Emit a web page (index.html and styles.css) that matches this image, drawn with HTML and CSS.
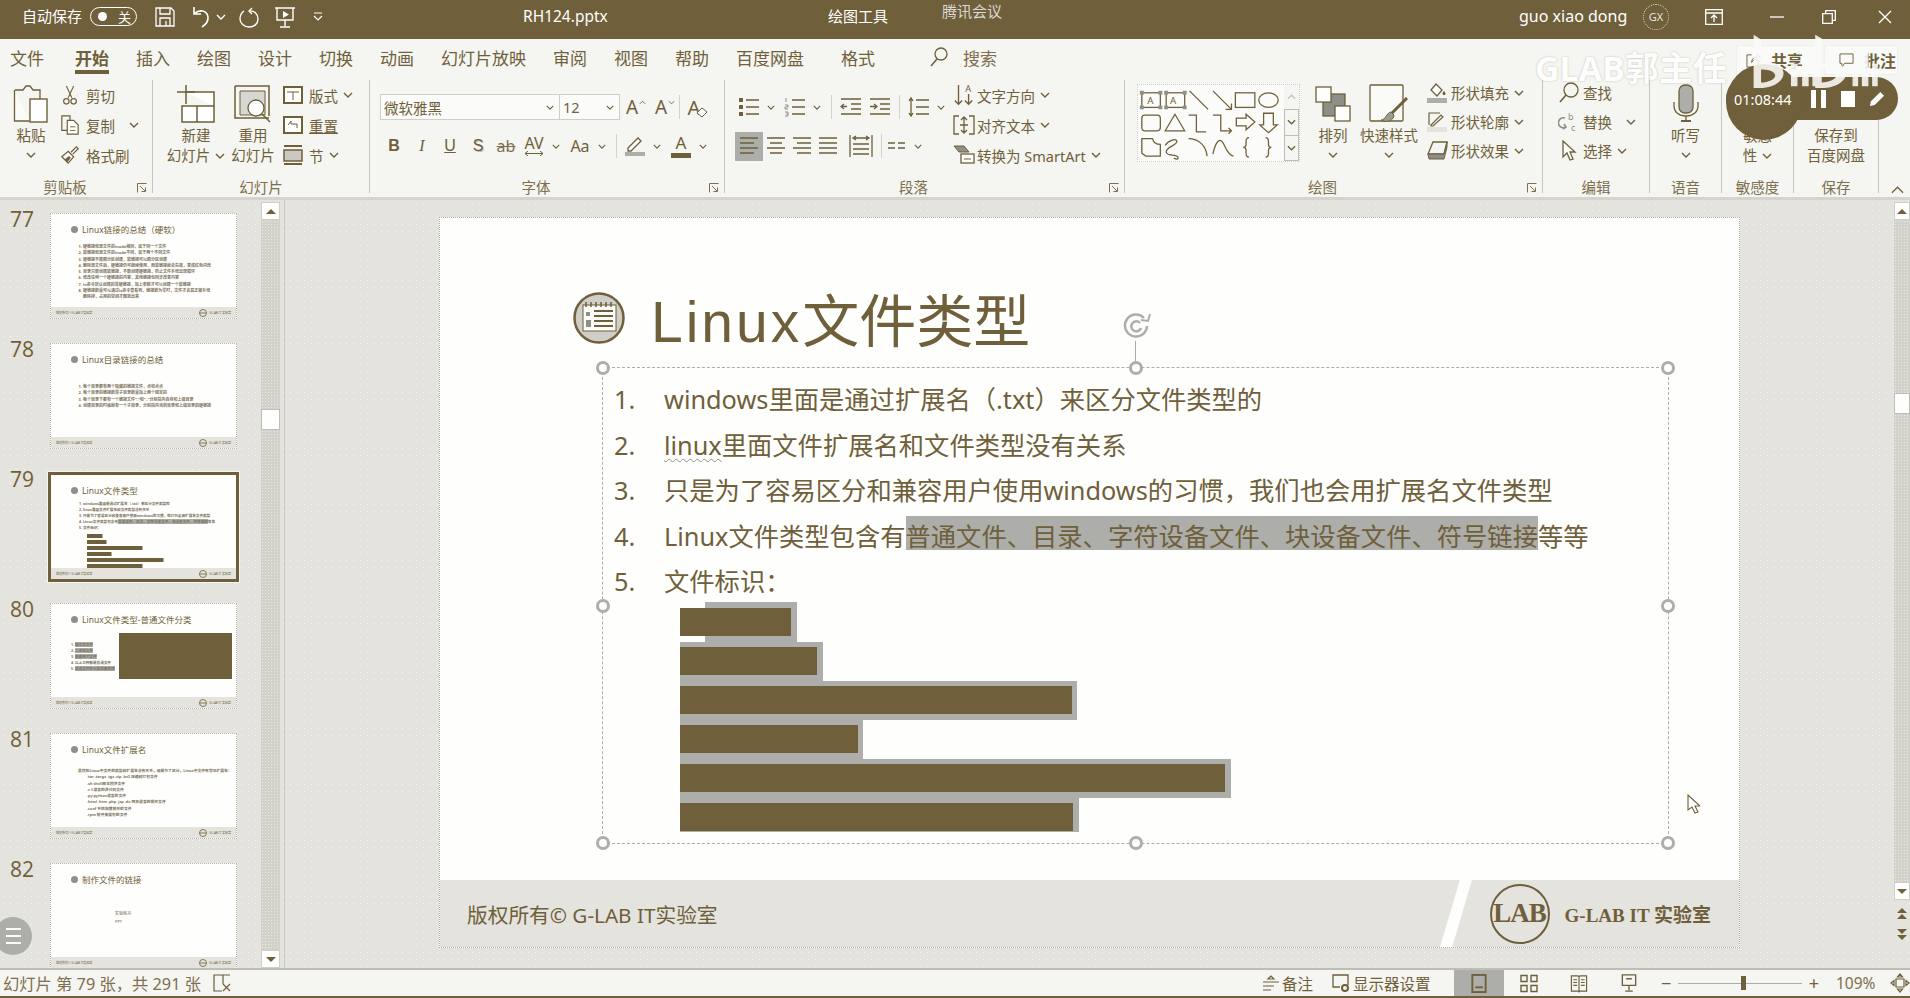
FILE: index.html
```html
<!DOCTYPE html>
<html lang="zh-CN">
<head>
    <meta charset="UTF-8">
    <title>RH124.pptx - PowerPoint</title>
    <link rel="stylesheet" href="styles.css">
</head>
<body>
    <svg class="defs" width="0" height="0">
        <symbol id="chev" viewBox="0 0 10 6"><path d="M1 1l4 4 4-4" fill="none" stroke="currentColor" stroke-width="1.4"/></symbol>
        <symbol id="launch" viewBox="0 0 10 10"><path d="M.5 9.5v-9h9M3 3l5 5M8.5 4.5v4h-4" fill="none" stroke="currentColor"/></symbol>
        <symbol id="tiny-logo" viewBox="0 0 10 10"><circle cx="5" cy="5" r="4.4" fill="none" stroke="currentColor"/><path d="M1 5h8" stroke="currentColor"/></symbol>
    </svg>

    <div class="app">
        <!-- title bar -->
        <header class="titlebar">
            <span class="autosave">自动保存</span>
            <span class="toggle"><i></i><b>关</b></span>
            <svg class="q-save" viewBox="0 0 20 20"><path d="M1 1h15l3 3v15H1zM5 1v6h10V1M5 19v-8h10v8M11 14v5" fill="none" stroke="currentColor" stroke-width="1.3"/></svg>
            <svg class="q-undo" viewBox="0 0 20 22"><path d="M4 1v7h7M4 8c5-5 13-4 14 3 .5 4-3 8-6 10" fill="none" stroke="currentColor" stroke-width="1.6"/></svg>
            <svg class="chev q-chev"><use href="#chev"/></svg>
            <svg class="q-redo" viewBox="0 0 20 22"><path d="M13 2l-3 3 3 3M10 5c5-1 9 3 9 8s-4 8-9 8-9-4-9-8c0-3 1-6 4-8" fill="none" stroke="currentColor" stroke-width="1.4"/></svg>
            <svg class="q-show" viewBox="0 0 22 22"><path d="M1 2h20M3 2v12h16V2M11 14v6M6 21h10" fill="none" stroke="currentColor" stroke-width="1.4"/><path d="M9 5l6 3.500-6 3.500z" fill="currentColor"/></svg>
            <svg class="q-more" viewBox="0 0 10 10"><path d="M1 1h8M1 4l4 4 4-4" fill="none" stroke="currentColor" stroke-width="1.2"/></svg>
            <span class="filename">RH124.pptx</span>
            <span class="context">绘图工具</span>
            <span class="meeting">腾讯会议</span>
            <span class="user">guo xiao dong</span>
            <span class="avatar">GX</span>
            <svg class="w-display" viewBox="0 0 18 16"><path d="M.7.7h16.600v14.600H.7zM1 4h16M9 13V6M6 9l3-3 3 3" fill="none" stroke="currentColor" stroke-width="1.300"/></svg>
            <svg class="w-min" viewBox="0 0 14 14"><path d="M0 7h14" stroke="currentColor" stroke-width="1.300"/></svg>
            <svg class="w-restore" viewBox="0 0 14 14"><path d="M.7 3.700h9.600v9.600H.7zM3.700 3.500V.7h9.600v9.600h-2.800" fill="none" stroke="currentColor" stroke-width="1.300"/></svg>
            <svg class="w-close" viewBox="0 0 14 14"><path d="M1 1l12 12M13 1L1 13" stroke="currentColor" stroke-width="1.300"/></svg>
        </header>

        <!-- tabs -->
        <nav class="tabs">
            <span>文件</span>
            <span class="tab-active">开始</span>
            <span>插入</span>
            <span>绘图</span>
            <span>设计</span>
            <span>切换</span>
            <span>动画</span>
            <span>幻灯片放映</span>
            <span>审阅</span>
            <span>视图</span>
            <span>帮助</span>
            <span>百度网盘</span>
            <span class="tab-format">格式</span>
            <svg class="tab-search-icon" viewBox="0 0 18 20"><circle cx="11" cy="7" r="6" fill="none" stroke="currentColor" stroke-width="1.300"/><path d="M7 12l-6 7" stroke="currentColor" stroke-width="1.500"/></svg>
            <span class="tab-search">搜索</span>
            <span class="share-btn">
                <svg viewBox="0 0 16 16" class="share-icon"><path d="M6 2H1v13h12v-4M6 10c0-4 3-6 6-6V1l4 5-4 4V7c-3 0-5 1-6 3z" fill="none" stroke="currentColor"/></svg>共享
            </span>
            <span class="share-btn comment-btn">
                <svg viewBox="0 0 16 16" class="share-icon"><path d="M1 1h14v10H6l-3 4v-4H1z" fill="none" stroke="currentColor"/></svg>批注
            </span>
        </nav>

        <!-- ribbon -->
        <section class="ribbon">
            <div class="group g-clip">
                <div class="group-body">
                    <div class="big big-paste">
                        <svg class="big-icon" width="36" height="40" viewBox="0 0 36 40"><path d="M2 6h8l3-4h4l3 4h7v10" fill="none" stroke="currentColor" stroke-width="1.300"/><path d="M1.500 6v31h15" fill="#fbfbf8" stroke="currentColor" stroke-width="1.300"/><rect x="17" y="15" width="17" height="23" fill="#fff" stroke="currentColor" stroke-width="1.400"/></svg>
                        <span>粘贴</span>
                        <svg class="chev"><use href="#chev"/></svg>
                    </div>
                    <div class="small-col">
                        <div class="row"><svg class="row-icon" viewBox="0 0 20 22"><path d="M6 1l6 13M14 1L8 14" stroke="currentColor" fill="none" stroke-width="1.200"/><circle cx="6" cy="18" r="3" fill="none" stroke="currentColor" stroke-width="1.300"/><circle cx="14" cy="18" r="3" fill="none" stroke="currentColor" stroke-width="1.300"/></svg>剪切</div>
                        <div class="row"><svg class="row-icon" viewBox="0 0 20 22"><path d="M7 17H1V1h9v5" fill="none" stroke="currentColor" stroke-width="1.300"/><path d="M7 6h7l5 5v10H7z" fill="#fff" stroke="currentColor" stroke-width="1.300"/><path d="M10 13h6M10 17h6" stroke="currentColor"/></svg>复制<svg class="chev chev-gap"><use href="#chev"/></svg></div>
                        <div class="row"><svg class="row-icon" viewBox="0 0 20 22"><path d="M1 13l7-6 6 6-6 7zM11 8l6-6 2 2-6 6" fill="#fff" stroke="currentColor" stroke-width="1.400"/><path d="M4 16l5-4 2 2-4 5z" fill="currentColor"/></svg>格式刷</div>
                    </div>
                </div>
                <div class="group-label"><span>剪贴板</span><svg class="launch"><use href="#launch"/></svg></div>
            </div>

            <div class="group g-slides">
                <div class="group-body">
                    <div class="big big-slide">
                        <svg class="big-icon" width="38" height="40" viewBox="0 0 38 40"><path d="M8 8h29v30H5V22h32M20 22v16" fill="#fff" stroke="currentColor" stroke-width="1.500"/><path d="M9 1v19M0 8h18" stroke="currentColor" stroke-width="1.500"/></svg>
                        <span>新建</span>
                        <span>幻灯片<svg class="chev chev-in"><use href="#chev"/></svg></span>
                    </div>
                    <div class="big big-slide big-reuse">
                        <svg class="big-icon" width="38" height="40" viewBox="0 0 38 40"><path d="M1 2h34v30M1 2v32h34" fill="none" stroke="currentColor" stroke-width="1.500"/><path d="M6 7h25v24H6z" fill="#d8d7d1" stroke="currentColor"/><circle cx="22" cy="24" r="8" fill="#fff" stroke="currentColor" stroke-width="1.300"/><path d="M28 30l8 8" stroke="currentColor" stroke-width="1.500"/></svg>
                        <span>重用</span>
                        <span>幻灯片</span>
                    </div>
                    <div class="small-col slide-tools">
                        <div class="row"><svg class="row-icon" viewBox="0 0 20 20"><rect x="1" y="2" width="18" height="16" fill="#fff" stroke="currentColor" stroke-width="2"/><path d="M4 7h12M10 7v8" stroke="currentColor"/></svg>版式<svg class="chev chev-in"><use href="#chev"/></svg></div>
                        <div class="row"><svg class="row-icon" viewBox="0 0 20 20"><rect x="1" y="2" width="18" height="16" fill="#fff" stroke="currentColor" stroke-width="2"/><path d="M5 10l3-4v3h6v4" fill="none" stroke="currentColor"/></svg><u>重置</u></div>
                        <div class="row"><svg class="row-icon" viewBox="0 0 20 20"><path d="M1 1h18M1 19h18" stroke="currentColor" stroke-width="2"/><rect x="1" y="5" width="18" height="11" fill="#c9c8c2" stroke="currentColor" stroke-width="1.500"/></svg>节<svg class="chev chev-in"><use href="#chev"/></svg></div>
                    </div>
                </div>
                <div class="group-label group-label-plain"><span>幻灯片</span></div>
            </div>

            <div class="group g-font">
                <div class="group-body stack">
                    <div class="tool-row">
                        <span class="combo combo-font">微软雅黑<svg class="chev"><use href="#chev"/></svg></span>
                        <span class="combo combo-size">12<svg class="chev"><use href="#chev"/></svg></span>
                        <span class="tool tool-glyph tool-grow">A<svg class="caret" viewBox="0 0 8 5"><path d="M1 4l3-3 3 3" fill="none" stroke="currentColor"/></svg></span>
                        <span class="tool tool-glyph tool-shrink">A<svg class="caret" viewBox="0 0 8 5"><path d="M1 1l3 3 3-3" fill="none" stroke="currentColor"/></svg></span>
                        <i class="sep sep-thin"></i>
                        <span class="tool tool-glyph tool-clear">A<svg class="eraser" viewBox="0 0 12 12"><path d="M1 7l5-5 5 4-5 5z" fill="#fff" stroke="currentColor"/></svg></span>
                    </div>
                    <div class="tool-row">
                        <span class="tool tool-b">B</span>
                        <span class="tool tool-i">I</span>
                        <span class="tool tool-u">U</span>
                        <span class="tool tool-s">S</span>
                        <span class="tool tool-strike">ab</span>
                        <span class="tool-drop"><span class="tool tool-av">AV<svg viewBox="0 0 20 5"><path d="M1 2.500h18M4 0L1 2.500 4 5M16 0l3 2.500L16 5" fill="none" stroke="currentColor"/></svg></span><svg class="chev"><use href="#chev"/></svg></span>
                        <span class="tool-drop"><span class="tool tool-case">Aa</span><svg class="chev"><use href="#chev"/></svg></span>
                        <i class="sep"></i>
                        <span class="tool-drop"><span class="tool"><svg class="ic22" viewBox="0 0 22 22"><path d="M4 13L14 3l3 3L7 16H4z" fill="#fff" stroke="currentColor" stroke-width="1.300"/><rect x="1" y="17" width="20" height="4" fill="#adaeaa"/></svg></span><svg class="chev"><use href="#chev"/></svg></span>
                        <span class="tool-drop"><span class="tool tool-color">A<i></i></span><svg class="chev"><use href="#chev"/></svg></span>
                    </div>
                </div>
                <div class="group-label"><span>字体</span><svg class="launch"><use href="#launch"/></svg></div>
            </div>

            <div class="group g-para">
                <div class="group-body para-body">
                    <div class="stack para-left">
                        <div class="tool-row">
                            <span class="tool-drop"><span class="tool"><svg class="ic22" viewBox="0 0 22 22"><path d="M8 4h13M8 11h13M8 18h13" stroke="currentColor" stroke-width="1.400"/><path d="M1 2h4v4H1zM1 9h4v4H1zM1 16h4v4H1z" fill="currentColor"/></svg></span><svg class="chev"><use href="#chev"/></svg></span>
                            <span class="tool-drop"><span class="tool"><svg class="ic22" viewBox="0 0 22 22"><path d="M8 4h13M8 11h13M8 18h13" stroke="currentColor" stroke-width="1.400"/><path d="M2 2v4M1 9h3v2H1v2h3M1 16h3v4H1M2 18h2" fill="none" stroke="#8f8f8a"/></svg></span><svg class="chev"><use href="#chev"/></svg></span>
                            <i class="sep"></i>
                            <span class="tool tool-30"><svg class="ic22" viewBox="0 0 22 22"><path d="M1 3h20M11 8h10M11 13h10M1 18h20M7 10.500H2M4 8l-3 2.500L4 13" fill="none" stroke="currentColor" stroke-width="1.300"/></svg></span>
                            <span class="tool"><svg class="ic22" viewBox="0 0 22 22"><path d="M1 3h20M11 8h10M11 13h10M1 18h20M1 10.500h6M5 8l3 2.500L5 13" fill="none" stroke="currentColor" stroke-width="1.300"/></svg></span>
                            <i class="sep sep-wide"></i>
                            <span class="tool-drop"><span class="tool"><svg class="ic22" viewBox="0 0 22 22"><path d="M8 4h13M8 11h13M8 18h13M3 2v18M1 5l2-3 2 3M1 17l2 3 2-3" fill="none" stroke="currentColor" stroke-width="1.300"/></svg></span><svg class="chev"><use href="#chev"/></svg></span>
                        </div>
                        <div class="tool-row">
                            <span class="tool tool-28 tool-on"><svg class="ic22" viewBox="0 0 22 22"><path d="M2 3h18M2 8h14M2 13h18M2 18h14" stroke="currentColor" stroke-width="1.400"/></svg></span>
                            <span class="tool tool-26"><svg class="ic22" viewBox="0 0 22 22"><path d="M2 3h18M5 8h12M2 13h18M5 18h12" stroke="currentColor" stroke-width="1.400"/></svg></span>
                            <span class="tool tool-26"><svg class="ic22" viewBox="0 0 22 22"><path d="M2 3h18M6 8h14M2 13h18M6 18h14" stroke="currentColor" stroke-width="1.400"/></svg></span>
                            <span class="tool tool-26"><svg class="ic22" viewBox="0 0 22 22"><path d="M2 3h18M2 8h18M2 13h18M2 18h18" stroke="currentColor" stroke-width="1.400"/></svg></span>
                            <span class="tool tool-40"><svg class="ic24" viewBox="0 0 24 24"><path d="M1 1v22M23 1v22M4 10h16M4 15h16M4 20h16M4 4h16M7 2L4 4l3 2M17 2l3 2-3 2" fill="none" stroke="currentColor" stroke-width="1.300"/></svg></span>
                            <i class="sep sep-tight"></i>
                            <span class="tool-drop"><span class="tool"><svg class="ic22" viewBox="0 0 22 22"><path d="M3 8h7M3 13h7M13 8h7M13 13h7" stroke="currentColor" stroke-width="1.600"/></svg></span><svg class="chev"><use href="#chev"/></svg></span>
                        </div>
                    </div>
                    <div class="small-col para-right">
                        <div class="row row-para"><svg class="row-icon row-icon-22" viewBox="0 0 22 24"><path d="M5 1v21M1 18l4 4 4-4M16 11v11M12 18l4 4 4-4" fill="none" stroke="currentColor" stroke-width="1.500"/><text x="12.500" y="9" class="svg-text">A</text></svg>文字方向<svg class="chev chev-in"><use href="#chev"/></svg></div>
                        <div class="row row-para"><svg class="row-icon row-icon-22" viewBox="0 0 22 22"><path d="M6 2H1v18h5M16 2h5v18h-5M11 3v16M8 6l3-3 3 3M8 16l3 3 3-3M7 11h8" fill="none" stroke="currentColor" stroke-width="1.300"/></svg>对齐文本<svg class="chev chev-in"><use href="#chev"/></svg></div>
                        <div class="row row-para"><svg class="row-icon row-icon-22" viewBox="0 0 22 22"><path d="M1 2h10l5 6H6z" fill="#8f8f8a" stroke="currentColor"/><rect x="8" y="10" width="13" height="9" fill="#fff" stroke="currentColor" stroke-width="1.300"/><path d="M11 15h7" stroke="currentColor"/></svg>转换为 SmartArt<svg class="chev chev-in"><use href="#chev"/></svg></div>
                    </div>
                </div>
                <div class="group-label"><span>段落</span><svg class="launch"><use href="#launch"/></svg></div>
            </div>

            <div class="group g-draw">
                <div class="group-body">
                    <div class="gallery">
                        <svg class="gallery-shapes" viewBox="0 0 146 78" fill="none" stroke="currentColor" stroke-width="1.300">
                            <rect x="2" y="8" width="19" height="15"/><text x="7.500" y="20" class="svg-text">A</text>
                            <path d="M0 6h4v4H0zM19 6h4v4h-4zM0 21h4v4H0zM19 21h4v4h-4z" fill="#8f8f8a" stroke="none"/>
                            <rect x="27" y="8" width="19" height="15"/><text x="31" y="20" class="svg-text">A</text>
                            <path d="M25 6h4v4h-4zM44 6h4v4h-4zM25 21h4v4h-4zM44 21h4v4h-4z" fill="#8f8f8a" stroke="none"/>
                            <path d="M51 6l19 19M75 6l19 19M94 19v6h-6"/>
                            <rect x="98" y="8" width="20" height="15"/>
                            <ellipse cx="132" cy="15.500" rx="10" ry="7.500"/>
                            <rect x="2" y="31" width="19" height="16" rx="3"/>
                            <path d="M36 30l10 17H26zM50 31h8v17h10M75 31h8v16h11M91 44l3 3-3 3"/>
                            <path d="M99 34h10v-4l9 8-9 8v-4H99zM127 29h10v12h4l-9 8-9-8h4z"/>
                            <path d="M2 55h11c1 4 4 6 8 6v12H6l-4-3zM26 62c3-5 12-8 12-4s-12 6-11 11 10 1 12 5c1 3-2 2-4 1M50 55c10 0 18 7 19 18M75 71c2-10 5-15 8-14 4 1 5 14 13 16"/>
                            <path d="M112 54c-3 0-3 2-3 4v3c0 2-1 3-3 3 2 0 3 1 3 3v3c0 2 0 4 3 4M129 54c3 0 3 2 3 4v3c0 2 1 3 3 3-2 0-3 1-3 3v3c0 2 0 4-3 4"/>
                        </svg>
                        <div class="gallery-scroll">
                            <span class="gs-up"><svg class="chev"><use href="#chev"/></svg></span>
                            <span class="gs-mid"><svg class="chev"><use href="#chev"/></svg></span>
                            <span class="gs-more"><svg class="chev"><use href="#chev"/></svg></span>
                        </div>
                    </div>
                    <div class="big big-arrange">
                        <svg class="big-icon" width="36" height="36" viewBox="0 0 36 36"><rect x="8" y="8" width="22" height="22" fill="#8f8f8a" stroke="currentColor" stroke-width="1.300"/><rect x="1" y="1" width="15" height="15" fill="#fff" stroke="currentColor" stroke-width="1.300"/><rect x="20" y="20" width="15" height="15" fill="#fff" stroke="currentColor" stroke-width="1.300"/></svg>
                        <span>排列</span>
                        <svg class="chev"><use href="#chev"/></svg>
                    </div>
                    <div class="big big-quick">
                        <svg class="big-icon" width="40" height="40" viewBox="0 0 40 40"><rect x="1" y="1" width="33" height="36" rx="1" fill="#fafaf7" stroke="currentColor" stroke-width="1.300"/><path d="M38 14L22 30" stroke="currentColor" stroke-width="3"/><path d="M22 28c-5 1-5 8-10 8 5 3 13 1 13-5z" fill="#9b9b93" stroke="currentColor"/></svg>
                        <span>快速样式</span>
                        <svg class="chev"><use href="#chev"/></svg>
                    </div>
                    <div class="small-col shape-col">
                        <div class="row row-shape"><svg class="row-icon row-icon-22" viewBox="0 0 22 22"><path d="M10 2l6 6-5 6-6-6z" fill="#fff" stroke="currentColor" stroke-width="1.300"/><path d="M18 9c2 2 2 4 0 4s-2-2 0-4z" fill="currentColor"/><rect x="1" y="16" width="20" height="5" fill="#adaeaa"/></svg>形状填充<svg class="chev chev-in"><use href="#chev"/></svg></div>
                        <div class="row row-shape"><svg class="row-icon row-icon-22" viewBox="0 0 22 22"><path d="M14 2H3v12M5 14l10-10 2 2L7 15H5z" fill="none" stroke="currentColor" stroke-width="1.200"/><rect x="1" y="16" width="20" height="5" fill="#e4e3dd"/></svg>形状轮廓<svg class="chev chev-in"><use href="#chev"/></svg></div>
                        <div class="row row-shape"><svg class="row-icon row-icon-22" viewBox="0 0 22 22"><path d="M7 2h14l-3 12H2z" fill="#f4f4f0" stroke="currentColor" stroke-width="1.300"/><path d="M2 14h16l3-12v5l-3 12H3z" fill="#8f8f8a" stroke="currentColor"/></svg>形状效果<svg class="chev chev-in"><use href="#chev"/></svg></div>
                    </div>
                </div>
                <div class="group-label"><span>绘图</span><svg class="launch"><use href="#launch"/></svg></div>
            </div>

            <div class="group g-edit">
                <div class="group-body">
                    <div class="small-col edit-col">
                        <div class="row row-shape"><svg class="row-icon row-icon-22" viewBox="0 0 20 22"><circle cx="12" cy="8" r="7" fill="none" stroke="currentColor" stroke-width="1.300"/><path d="M7 13l-6 7" stroke="currentColor" stroke-width="1.600"/></svg>查找</div>
                        <div class="row row-shape"><svg class="row-icon row-icon-22" viewBox="0 0 20 22"><path d="M6 7a5 5 0 1 0 1 9M4 18l3-2-2-3" fill="none" stroke="#8f8f8a" stroke-width="1.600"/><text x="9" y="9" class="svg-text svg-text-soft">b</text><text x="12" y="20" class="svg-text svg-text-soft">c</text></svg>替换<svg class="chev chev-gap"><use href="#chev"/></svg></div>
                        <div class="row row-shape"><svg class="row-icon row-icon-22" viewBox="0 0 16 22"><path d="M2 1v16l4-4 3 7 3-1-3-7h5z" fill="#fff" stroke="currentColor" stroke-width="1.300"/></svg>选择<svg class="chev chev-in"><use href="#chev"/></svg></div>
                    </div>
                </div>
                <div class="group-label group-label-plain"><span>编辑</span></div>
            </div>

            <div class="group g-voice">
                <div class="group-body">
                    <div class="big big-full">
                        <svg class="big-icon" width="26" height="40" viewBox="0 0 26 40"><rect x="6" y="1" width="14" height="28" rx="6" fill="#adaeaa" stroke="currentColor" stroke-width="1.300"/><path d="M1 18v4c0 6 5 10 12 10s12-4 12-10v-4M13 32v5" fill="none" stroke="currentColor" stroke-width="1.300"/><path d="M8 37h10" stroke="currentColor" stroke-width="2"/></svg>
                        <span>听写</span>
                        <svg class="chev"><use href="#chev"/></svg>
                    </div>
                </div>
                <div class="group-label group-label-plain"><span>语音</span></div>
            </div>

            <div class="group g-sens">
                <div class="group-body">
                    <div class="big big-full">
                        <span class="big-blank"></span>
                        <span>敏感</span>
                        <span>性<svg class="chev chev-in"><use href="#chev"/></svg></span>
                    </div>
                </div>
                <div class="group-label group-label-plain"><span>敏感度</span></div>
            </div>

            <div class="group g-save">
                <div class="group-body">
                    <div class="big big-full">
                        <span class="big-blank"></span>
                        <span>保存到</span>
                        <span>百度网盘</span>
                    </div>
                </div>
                <div class="group-label group-label-plain"><span>保存</span></div>
            </div>

            <svg class="collapse" viewBox="0 0 14 8"><path d="M1 7l6-6 6 6" fill="none" stroke="currentColor" stroke-width="1.300"/></svg>
        </section>

        <!-- thumbnails + slide -->
        <main class="workspace">
            <aside class="thumbs">
                <div class="thumb-list-wrap">
                    <div class="thumb-row">
                        <span class="thumb-num">77</span>
                        <div class="thumb">
                            <div class="thumb-main">
                                <div class="thumb-title"><i></i>Linux链接的总结（硬软）</div>
                                <ol class="thumb-lines">
                                    <li>硬链接和源文件的inode相同，属于同一个文件</li>
                                    <li>软链接和源文件的inode不同，属于两个不同文件</li>
                                    <li>硬链接不能跨分区创建，软链接可以跨分区创建</li>
                                    <li>删除源文件后，硬链接仍可继续使用，而软链接就会失效，变成红色闪烁</li>
                                    <li>目录只能创建软链接，不能创建硬链接，防止文件系统出现循环</li>
                                    <li>修改任何一个硬链接的内容，其他链接也同步改变内容</li>
                                    <li>ln命令默认创建的是硬链接，加上参数才可以创建一个软链接</li>
                                    <li>硬链接数量可以通过ls命令查看到，链接数为零时，文件才会真正被系统删除掉，占用的空间才释放出来</li>
                                </ol>
                            </div>
                            <div class="thumb-foot"><span>版权所有© G-LAB IT实验室</span><span class="thumb-brand"><svg><use href="#tiny-logo"/></svg>G-LAB IT 实验室</span></div>
                        </div>
                    </div>
                    <div class="thumb-row">
                        <span class="thumb-num">78</span>
                        <div class="thumb">
                            <div class="thumb-main">
                                <div class="thumb-title"><i></i>Linux目录链接的总结</div>
                                <ol class="thumb-lines lines-78">
                                    <li>每个目录都有两个隐藏的链接文件，点和点点</li>
                                    <li>每个目录的链接数是子目录数量加上两个固定的</li>
                                    <li>每个目录下都有一个链接文件“.”和“..”分别指向自身和上级目录</li>
                                    <li>创建目录的时候就有一个子目录，分别指向当前目录和上级目录的硬链接</li>
                                </ol>
                            </div>
                            <div class="thumb-foot"><span>版权所有© G-LAB IT实验室</span><span class="thumb-brand"><svg><use href="#tiny-logo"/></svg>G-LAB IT 实验室</span></div>
                        </div>
                    </div>
                    <div class="thumb-row">
                        <span class="thumb-num">79</span>
                        <div class="thumb thumb-selected">
                            <div class="thumb-main">
                                <div class="thumb-title"><i></i>Linux文件类型</div>
                                <ol class="thumb-lines lines-79">
                                    <li>windows里面是通过扩展名（.txt）来区分文件类型的</li>
                                    <li>linux里面文件扩展名和文件类型没有关系</li>
                                    <li>只是为了容易区分和兼容用户使用windows的习惯，我们也会用扩展名文件类型</li>
                                    <li>Linux文件类型包含有<mark>普通文件、目录、字符设备文件、块设备文件、符号链接</mark>等等</li>
                                    <li>文件标识：</li>
                                </ol>
                                <div class="mini-bars">
                                    <i class="mb-1"></i><i class="mb-2"></i><i class="mb-3"></i><i class="mb-4"></i><i class="mb-5"></i><i class="mb-3"></i>
                                </div>
                            </div>
                            <div class="thumb-foot"><span>版权所有© G-LAB IT实验室</span><span class="thumb-brand"><svg><use href="#tiny-logo"/></svg>G-LAB IT 实验室</span></div>
                        </div>
                    </div>
                    <div class="thumb-row">
                        <span class="thumb-num">80</span>
                        <div class="thumb">
                            <div class="thumb-main">
                                <div class="thumb-title"><i></i>Linux文件类型-普通文件分类</div>
                                <div class="split-80">
                                    <ol class="thumb-lines lines-80">
                                        <li><mark>纯文本文件</mark></li>
                                        <li><mark>二进制文件</mark></li>
                                        <li><mark>数据格式文件</mark></li>
                                        <li>以上三种都是普通文件</li>
                                        <li><mark>普通文件的分类就是这样</mark></li>
                                    </ol>
                                    <div class="block-80"></div>
                                </div>
                            </div>
                            <div class="thumb-foot"><span>版权所有© G-LAB IT实验室</span><span class="thumb-brand"><svg><use href="#tiny-logo"/></svg>G-LAB IT 实验室</span></div>
                        </div>
                    </div>
                    <div class="thumb-row">
                        <span class="thumb-num">81</span>
                        <div class="thumb">
                            <div class="thumb-main">
                                <div class="thumb-title"><i></i>Linux文件扩展名</div>
                                <div class="ext-81">
                                    <p>虽然在Linux中文件的类型和扩展名没有关系，但是为了区分，Linux中文件有常见扩展名：</p>
                                    <p class="ext-in">.tar .tar.gz .tgz .zip .bz2 压缩和打包文件</p>
                                    <p class="ext-in">.sh shell脚本程序文件</p>
                                    <p class="ext-in">.c C语言的源代码文件</p>
                                    <p class="ext-in">.py python语言的文件</p>
                                    <p class="ext-in">.html .htm .php .jsp .do 网页语言的相关文件</p>
                                    <p class="ext-in">.conf 系统配置相关的文件</p>
                                    <p class="ext-in">.rpm 软件安装包的文件</p>
                                </div>
                            </div>
                            <div class="thumb-foot"><span>版权所有© G-LAB IT实验室</span><span class="thumb-brand"><svg><use href="#tiny-logo"/></svg>G-LAB IT 实验室</span></div>
                        </div>
                    </div>
                    <div class="thumb-row">
                        <span class="thumb-num">82</span>
                        <div class="thumb">
                            <div class="thumb-main">
                                <div class="thumb-title thumb-title-cn"><i></i>制作文件的链接</div>
                                <div class="note-82"><p>实验练习</p><p>PPT</p></div>
                            </div>
                            <div class="thumb-foot"><span>版权所有© G-LAB IT实验室</span><span class="thumb-brand"><svg><use href="#tiny-logo"/></svg>G-LAB IT 实验室</span></div>
                        </div>
                    </div>
                </div>
                <div class="thumb-scroll">
                    <span class="sb-btn"><i class="tri-up"></i></span>
                    <span class="sb-track sb-track-a"></span>
                    <span class="sb-thumb"></span>
                    <span class="sb-track"></span>
                    <span class="sb-btn"><i class="tri-down"></i></span>
                </div>
            </aside>

            <div class="stage">
                <article class="slide">
                    <div class="slide-body">
                        <h1 class="slide-title">
                            <svg class="title-badge" viewBox="0 0 52 52"><circle cx="26" cy="26" r="24.500" fill="#cfcec8" stroke="#6f5f3a" stroke-width="2.500"/><rect x="10" y="13" width="33" height="26" fill="#fbfbf8" stroke="#6f5f3a"/><path d="M13 10v5M18 10v5M23 10v5M28 10v5M33 10v5M38 10v5" stroke="#6f5f3a" stroke-width="1.500"/><path d="M21 19h19M21 24h19M21 29h19M21 34h19" stroke="#6f5f3a" stroke-width="2"/><path d="M13 20h4v4h-4zM13 28h5v7h-5z" fill="#8f8f8a"/></svg>
                            <span><span class="title-latin">Linux</span>文件类型</span>
                        </h1>
                        <div class="placeholder">
                            <span class="rotate-stalk"></span>
                            <svg class="rotate" viewBox="0 0 32 32"><path d="M24 8a11 11 0 1 0 3 8M20 13a5 5 0 1 0 1 5" fill="none" stroke="#adaeaa" stroke-width="2.500"/><path d="M21 10l7 1 2-7" fill="none" stroke="#adaeaa" stroke-width="2"/></svg>
                            <i class="handle h-tl"></i><i class="handle h-tm"></i><i class="handle h-tr"></i>
                            <i class="handle h-ml"></i><i class="handle h-mr"></i>
                            <i class="handle h-bl"></i><i class="handle h-bm"></i><i class="handle h-br"></i>

                            <ol class="points">
                                <li><span class="num">1.</span><span>windows里面是通过扩展名（.txt）来区分文件类型的</span></li>
                                <li><span class="num">2.</span><span><span class="squiggle">linux</span>里面文件扩展名和文件类型没有关系</span></li>
                                <li><span class="num">3.</span><span>只是为了容易区分和兼容用户使用windows的习惯，我们也会用扩展名文件类型</span></li>
                                <li><span class="num">4.</span><span>Linux文件类型包含有<mark class="hl">普通文件、目录、字符设备文件、块设备文件、符号链接</mark>等等</span></li>
                                <li><span class="num">5.</span><span>文件标识：</span></li>
                            </ol>

                            <div class="redactions">
                                <div class="rd-row rd-1"><i></i></div>
                                <div class="rd-row rd-2"><i></i></div>
                                <div class="rd-row rd-3"><i></i></div>
                                <div class="rd-row rd-4"><i></i></div>
                                <div class="rd-row rd-5"><i></i></div>
                                <div class="rd-row rd-6"><i></i></div>
                            </div>
                        </div>
                        <svg class="mouse" viewBox="0 0 13 20"><path d="M1 1v15l4-3 3 6 3-1-3-6h5z" fill="#fff" stroke="#6f5f3a" stroke-width="1.100"/></svg>
                    </div>
                    <footer class="slide-foot">
                        <i class="foot-stripe"></i>
                        <span class="copyright">版权所有© G-LAB IT实验室</span>
                        <span class="foot-brand">
                            <span class="lab-logo">LAB</span>
                            <span class="lab-name">G-LAB IT 实验室</span>
                        </span>
                    </footer>
                </article>
            </div>

            <div class="main-scroll">
                <span class="sb-btn"><i class="tri-up"></i></span>
                <span class="sb-track sb-track-b"></span>
                <span class="sb-thumb"></span>
                <span class="sb-track sb-track-c"></span>
                <span class="sb-btn"><i class="tri-down"></i></span>
                <span class="page-jump"><i class="tri-up"></i><i class="tri-up"></i></span>
                <span class="page-jump"><i class="tri-down"></i><i class="tri-down"></i></span>
            </div>
        </main>

        <!-- status bar -->
        <footer class="statusbar">
            <span class="status-count">幻灯片 第 79 张，共 291 张</span>
            <svg class="status-spell" viewBox="0 0 18 18"><path d="M17 1H1v16h8M10 1v9M10 10l7 7M17 10l-7 7" fill="none" stroke="currentColor" stroke-width="1.200"/></svg>
            <span class="status-notes"><svg viewBox="0 0 18 16"><path d="M1 7h16M1 11h11M1 15h8M9 1l-3 3h6z" fill="none" stroke="currentColor" stroke-width="1.200"/></svg>备注</span>
            <span class="status-display"><svg viewBox="0 0 18 18"><path d="M16 11V1H1v12h7" fill="none" stroke="currentColor" stroke-width="1.300"/><circle cx="13" cy="14" r="3" fill="none" stroke="currentColor" stroke-width="2"/></svg>显示器设置</span>
            <span class="view view-on"><svg viewBox="0 0 16 20"><rect x="1" y="1" width="14" height="18" fill="none" stroke="currentColor" stroke-width="2"/><path d="M4 14h8" stroke="currentColor" stroke-width="2"/></svg></span>
            <span class="view"><svg viewBox="0 0 18 18"><path d="M1 1h6v6H1zM11 1h6v6h-6zM1 11h6v6H1zM11 11h6v6h-6z" fill="none" stroke="currentColor" stroke-width="1.400"/></svg></span>
            <span class="view"><svg viewBox="0 0 18 20"><path d="M1 2h7l1 1 1-1h7v16h-7l-1 1-1-1H1zM9 3v15M3 6h4M3 9h4M3 12h4M11 6h4M11 9h4M11 12h4" fill="none" stroke="currentColor" stroke-width="1.200"/></svg></span>
            <span class="view"><svg viewBox="0 0 16 20"><path d="M1 1h14v11H1zM8 12v5M4 18h8M5 5h6" fill="none" stroke="currentColor" stroke-width="1.400"/></svg></span>
            <div class="zoom-slider">
                <span class="zoom-sign">−</span>
                <span class="zoom-track"><i></i></span>
                <span class="zoom-sign">+</span>
            </div>
            <span class="zoom-pct">109%</span>
            <svg class="fit" viewBox="0 0 20 20"><path d="M6 6h8v8H6zM10 1l-2.500 3h5zM10 19l-2.500-3h5zM1 10l3-2.500v5zM19 10l-3-2.500v5z" fill="none" stroke="currentColor" stroke-width="1.200"/></svg>
        </footer>

        <!-- things floating over the window -->
        <div class="watermark">GLAB郭主任</div>
        <div class="recorder">
            <span class="rec-time">01:08:44</span>
            <span class="rec-pause"><i></i><i></i></span>
            <span class="rec-stop"></span>
            <svg class="rec-pen" viewBox="0 0 16 16"><path d="M0 16l1-5L11 1l4 4L5 15z" fill="#fff"/></svg>
        </div>
        <svg class="bili" viewBox="0 0 150 62" fill="#fbfbf8">
            <path d="M6 3l8 5v26c8-3 22-2 24 9 1 10-12 17-25 17H6zM14 40v14c8 0 16-4 15-8-1-5-9-6-15-6z"/>
            <path d="M46 34h7v24h-7zM58 22h7v36h-7zM69 34h6v24h-6z"/>
            <path d="M72 3l7 4v27c10-3 24-1 26 9 1 10-12 17-26 17h-7zM79 40v14c8 0 16-4 16-8-1-5-10-6-16-6z"/>
            <path d="M112 34h6v24h-6zM122 22h7v36h-7zM133 34h6v24h-6z"/>
        </svg>
        <div class="float-menu"><i></i><i></i><i></i></div>
    </div>
</body>
</html>
```

FILE: styles.css
```css
* {
    box-sizing: border-box;
}
html, body {
    margin: 0;
    padding: 0;
    height: 100%;
    overflow: hidden;
}
body {
    font-family: "Noto Sans", "Noto Sans CJK SC", sans-serif;
    color: #6f5f3a;
    background: #e4e3dd;
}
.defs {
    position: absolute;
}
.app {
    position: relative;
    width: 1910px;
    height: 998px;
    display: flex;
    flex-direction: column;
    overflow: hidden;
}
svg {
    display: block;
    flex: none;
}
i {
    font-style: normal;
}

/* title bar */
.titlebar {
    height: 39px;
    flex: none;
    background: #6f5f3a;
    color: #fff;
    display: flex;
    align-items: center;
    padding: 0 0 6px 22px;
    font-size: 15px;
}
.autosave {
    width: 68px;
    margin-top: -2px;
}
.toggle {
    width: 47px;
    height: 19px;
    border: 1px solid #fff;
    border-radius: 10px;
    display: flex;
    align-items: center;
    padding: 0 5px 0 7px;
    justify-content: space-between;
}
.toggle i {
    width: 9px;
    height: 9px;
    border-radius: 50%;
    background: #fff;
}
.toggle b {
    font-weight: 400;
    font-size: 13px;
}
.q-save { width: 20px; height: 20px; margin-left: 18px; }
.q-undo { width: 20px; height: 22px; margin-left: 15px; }
.q-chev { width: 8px; height: 5px; margin-left: 6px; }
.q-redo { width: 20px; height: 22px; margin-left: 13px; }
.q-show { width: 22px; height: 22px; margin-left: 15px; }
.q-more { width: 10px; height: 10px; margin-left: 17px; }
.filename { margin-left: 200px; width: 305px; font-size: 15.500px; margin-top: -2px; }
.context { width: 114px; margin-top: -2px; }
.meeting { width: 577px; color: #d9d8d2; margin-top: -12px; }
.user { width: 124px; font-size: 16px; margin-top: -1px; }
.avatar {
    width: 26px;
    height: 26px;
    border: 1px dotted #d9d8d2;
    border-radius: 50%;
    font-size: 11px;
    color: #e4e3dd;
    text-align: center;
    line-height: 24px;
}
.w-display { width: 18px; height: 16px; margin-left: 36px; }
.w-min { width: 14px; height: 14px; margin-left: 47px; }
.w-restore { width: 14px; height: 14px; margin-left: 38px; }
.w-close { width: 14px; height: 14px; margin-left: 42px; }

/* tabs */
.tabs {
    height: 36px;
    flex: none;
    background: #f5f5f1;
    display: flex;
    align-items: center;
    gap: 27px;
    padding-left: 10px;
    font-size: 17px;
}
.tab-active {
    font-weight: 700;
    position: relative;
    margin-left: 4px;
}
.tab-active::after {
    content: "";
    position: absolute;
    left: 0;
    right: 0;
    bottom: -4px;
    height: 4px;
    background: #6f5f3a;
}
.tab-format { margin-left: 10px; }
.tab-search-icon { width: 18px; height: 20px; margin-left: 28px; }
.tab-search { margin-left: -12px; color: #7d6f4f; }
.share-btn {
    margin-left: auto;
    width: 84px;
    height: 30px;
    display: flex;
    align-items: center;
    gap: 10px;
    padding-left: 9px;
    border: 1px solid #f0efea;
    background: #fafaf8;
    font-weight: 700;
    font-size: 16px;
    margin-top: 6px;
}
.comment-btn {
    margin-left: -23px;
    margin-right: 12px;
    width: 74px;
    padding-left: 14px;
}
.share-icon { width: 15px; height: 15px; }

/* ribbon */
.ribbon {
    height: 125px;
    flex: none;
    display: flex;
    padding-top: 5px;
    background: #f5f5f1;
    border-bottom: 3px solid #d4d3cc;
    font-size: 14.500px;
    position: relative;
}
.group {
    height: 113px;
    flex: none;
    border-right: 1px solid #c5c4be;
    display: flex;
    flex-direction: column;
}
.g-clip { width: 153px; }
.g-slides { width: 217px; }
.g-font { width: 355px; }
.g-para { width: 400px; }
.g-draw { width: 418px; }
.g-edit { width: 107px; }
.g-voice { width: 72px; }
.g-sens { width: 72px; }
.g-save { width: 85px; }
.group-body {
    height: 97px;
    display: flex;
}
.group-label {
    height: 16px;
    line-height: 20px;
    display: flex;
    padding-right: 22px;
    position: relative;
    color: #7d6f4f;
}
.group-label span {
    flex: 1;
    text-align: center;
}
.group-label-plain {
    padding-right: 0;
}
.launch {
    position: absolute;
    right: 5px;
    top: 6px;
    width: 10px;
    height: 10px;
}
.chev {
    width: 10px;
    height: 6px;
    display: block;
}
.chev-in {
    display: inline-block;
    margin-left: 5px;
    vertical-align: 2px;
}
.chev-gap {
    margin-left: 14px;
}

.big {
    display: flex;
    flex-direction: column;
    align-items: center;
    line-height: 20px;
    white-space: nowrap;
}
.big-icon {
    height: 40px;
    margin: 4px 0 1px;
}
.big .chev {
    margin-top: 7px;
}
.big .chev-in {
    margin-top: 0;
}
.big-blank {
    height: 45px;
}
.big-paste { width: 50px; margin-left: 6px; }
.big-slide { width: 62px; margin-left: 12px; }
.big-reuse { margin-left: -4px; width: 60px; }
.big-arrange { width: 50px; margin-left: 8px; }
.big-quick { width: 62px; }
.big-full { width: 100%; }

.small-col {
    display: flex;
    flex-direction: column;
    margin-left: 4px;
}
.slide-tools {
    margin-left: 0;
}
.row {
    height: 30px;
    display: flex;
    align-items: center;
    white-space: nowrap;
}
.row-icon {
    width: 20px;
    height: 20px;
    margin-right: 6px;
}
.row-icon-22 {
    width: 22px;
    height: 22px;
    margin-right: 3px;
}
.svg-text {
    font-size: 10px;
    fill: currentColor;
    stroke: none;
    font-family: "Noto Sans", sans-serif;
}
.svg-text-soft {
    fill: #8f8f8a;
    font-size: 9px;
}

/* font + paragraph tools */
.stack {
    flex-direction: column;
    padding: 13px 0 0 10px;
    gap: 11px;
}
.tool-row {
    height: 28px;
    display: flex;
    align-items: center;
    white-space: nowrap;
}
.combo {
    height: 26px;
    background: #fbfbf9;
    border: 1px solid #cfcec8;
    display: flex;
    align-items: center;
    justify-content: space-between;
    padding: 0 5px 0 3px;
    font-size: 14.500px;
}
.combo-font { width: 180px; }
.combo-size { width: 61px; margin-left: -1px; }
.combo .chev { width: 8px; height: 5px; }
.tool {
    width: 28px;
    height: 28px;
    display: flex;
    align-items: center;
    justify-content: center;
    flex: none;
    font-size: 16px;
}
.tool-drop {
    width: 46px;
    display: flex;
    align-items: center;
}
.tool-drop .chev {
    width: 8px;
    height: 5px;
    margin-left: 4px;
}
.tool-26 { width: 26px; }
.tool-28 { width: 28px; }
.tool-30 { width: 30px; }
.tool-40 { width: 40px; }
.tool-on {
    background: #adaeaa;
    height: 29px;
}
.ic22 { width: 22px; height: 22px; }
.ic24 { width: 24px; height: 24px; }
.sep {
    width: 1px;
    height: 24px;
    background: #d3d2cb;
    margin: 0 4px;
    flex: none;
}
.sep-tight { margin: 0; }
.sep-thin { margin: 0 1px; }
.sep-wide { margin: 0 5px; }
.tool-glyph {
    font-size: 19px;
    position: relative;
    width: 26px;
}
.tool-grow { margin-left: 3px; }
.tool-shrink { margin-left: 3px; }
.caret {
    width: 7px;
    height: 5px;
    margin: -9px 0 0 1px;
}
.tool-clear {
    font-size: 20px;
}
.eraser {
    position: absolute;
    right: -1px;
    bottom: 3px;
    width: 12px;
    height: 12px;
}
.tool-b { font-weight: 700; font-family: "Liberation Sans", sans-serif; }
.tool-i { font-style: italic; font-family: "Liberation Serif", serif; }
.tool-u { text-decoration: underline; font-family: "Liberation Sans", sans-serif; }
.tool-s { font-family: "Liberation Sans", sans-serif; text-shadow: 1px 1px 0 #bcbcb6; }
.tool-strike { text-decoration: line-through; color: #7d6f4f; }
.tool-av {
    flex-direction: column;
    line-height: 14px;
}
.tool-av svg {
    width: 20px;
    height: 5px;
    margin-top: 1px;
}
.tool-color {
    flex-direction: column;
    line-height: 16px;
    font-size: 17px;
}
.tool-color i {
    width: 20px;
    height: 5px;
    background: #6f5f3a;
    margin-top: 2px;
}
.para-body {
    display: flex;
}
.para-left {
    display: flex;
    width: 228px;
}
.para-right {
    margin-left: 0;
}
.row-para .row-icon-22 {
    margin-right: 2px;
}

/* shapes gallery */
.gallery {
    margin: 4px 0 0 12px;
    width: 163px;
    height: 78px;
    display: flex;
    background: #fbfbf9;
    border: 1px dotted #cfcec8;
}
.gallery-shapes {
    width: 146px;
    height: 76px;
    flex: none;
}
.gallery-scroll {
    width: 17px;
    display: flex;
    flex-direction: column;
    background: #f5f5f1;
}
.gallery-scroll span {
    flex: 1;
    display: flex;
    align-items: center;
    justify-content: center;
    border: 1px solid #bebdb6;
    margin-top: -1px;
}
.gallery-scroll .chev { width: 9px; height: 6px; }
.gallery-scroll .gs-up {
    border-color: transparent;
    color: #c5c4be;
}
.gs-up .chev { transform: rotate(180deg); }
.row-shape {
    height: 29px;
}
.shape-col {
    margin-left: 6px;
    margin-top: -2px;
}
.edit-col {
    margin-left: 15px;
    margin-top: -2px;
}
.collapse {
    position: absolute;
    right: 6px;
    bottom: 3px;
    width: 13px;
    height: 8px;
}

/* workspace */
.workspace {
    flex: 1;
    display: flex;
    min-height: 0;
    background-color: #e4e3dd;
    background-image: radial-gradient(circle, #f4f3ef 0.7px, transparent 1px);
    background-size: 7px 7px;
}
.thumbs {
    width: 285px;
    flex: none;
    display: flex;
    border-right: 1px solid #c8c7c1;
    padding-right: 4px;
    overflow: hidden;
}
.thumb-list-wrap {
    width: 261px;
    flex: none;
    padding-top: 13px;
    overflow: hidden;
}
.thumb-row {
    height: 130px;
    display: flex;
}
.thumb-num {
    width: 50px;
    padding-left: 10px;
    font-size: 21px;
    line-height: 12px;
    font-family: "Open Sans", sans-serif;
}
.thumb {
    width: 187px;
    height: 106px;
    display: flex;
    flex-direction: column;
    background: #fefefc;
    border: 1px dotted #b6b5ae;
}
.thumb-selected {
    height: 110px;
    margin: -1px 0 0 -2px;
    width: 191px;
    border: 3px solid #6f5f3a;
    outline: 1px solid #f5f5f1;
}
.thumb-main {
    flex: 1;
    min-height: 0;
    overflow: hidden;
    padding-top: 9px;
}
.thumb-title {
    display: flex;
    align-items: center;
    height: 12px;
    padding-left: 20px;
    font-size: 8.500px;
    white-space: nowrap;
}
.thumb-title i {
    width: 7px;
    height: 7px;
    border-radius: 50%;
    background: #8f8f8a;
    margin-right: 4px;
    flex: none;
}
.thumb-lines {
    margin: 9px 0 0;
    padding: 0 24px 0 32px;
    font-size: 4px;
    line-height: 6.300px;
    font-weight: 700;
    color: #7d7460;
}
.lines-78 { margin-top: 19px; }
.lines-79 {
    margin-top: 5px;
    line-height: 6px;
    font-size: 3.600px;
    padding-right: 8px;
}
.thumb-lines mark {
    background: #adaeaa;
    color: inherit;
}
.mini-bars {
    padding-left: 36px;
    display: flex;
    flex-direction: column;
    gap: 2px;
    margin-top: 3px;
}
.mini-bars i {
    height: 4px;
    background: #6f5f3a;
    box-shadow: 1px 0 0 #adaeaa;
}
.mb-1 { width: 15px; }
.mb-2 { width: 19px; }
.mb-3 { width: 55px; }
.mb-4 { width: 24px; }
.mb-5 { width: 76px; }
.split-80 {
    display: flex;
    margin-top: 8px;
}
.lines-80 {
    width: 68px;
    margin: 9px 0 0;
    padding: 0 0 0 24px;
    font-size: 3.600px;
    line-height: 6px;
}
.block-80 {
    width: 113px;
    height: 46px;
    background: #6f5f3a;
}
.ext-81 {
    font-size: 3.800px;
    font-weight: 700;
    line-height: 6.300px;
    padding: 13px 0 0 27px;
    white-space: nowrap;
    color: #7d7460;
}
.ext-81 p, .note-82 p {
    margin: 0;
}
.ext-in {
    padding-left: 9px;
}
.note-82 {
    font-size: 4px;
    line-height: 8px;
    padding: 25px 0 0 64px;
}
.thumb-foot {
    height: 11px;
    flex: none;
    background: #e4e3dd;
    display: flex;
    align-items: center;
    justify-content: space-between;
    padding: 0 5px;
    font-size: 3px;
}
.thumb-brand {
    display: flex;
    align-items: center;
    gap: 2px;
}
.thumb-brand svg {
    width: 8px;
    height: 8px;
}

/* scrollbars */
.thumb-scroll, .main-scroll {
    width: 19px;
    flex: none;
    display: flex;
    flex-direction: column;
    padding-top: 2px;
}
.main-scroll {
    width: 16px;
}
.sb-btn {
    height: 18px;
    flex: none;
    background: #fefefc;
    border: 1px solid #cfcec8;
    display: flex;
    align-items: center;
    justify-content: center;
}
.sb-track {
    flex: 1;
    background-color: #d3d2ca;
    background-image: radial-gradient(circle, #e9e8e3 0.6px, transparent 0.8px);
    background-size: 3px 3px;
}
.sb-track-a { flex: none; height: 189px; }
.sb-track-b { flex: none; height: 173px; }
.sb-track-c { flex: none; height: 468px; }
.sb-thumb {
    height: 21px;
    flex: none;
    background: #fefefc;
    border: 1px solid #bebdb6;
}
.tri-up, .tri-down {
    display: block;
    width: 0;
    height: 0;
    border-left: 5px solid transparent;
    border-right: 5px solid transparent;
}
.tri-up { border-bottom: 5px solid #6f5f3a; }
.tri-down { border-top: 5px solid #6f5f3a; }
.page-jump {
    height: 20px;
    margin-top: 1px;
    display: flex;
    flex-direction: column;
    align-items: center;
    justify-content: center;
    gap: 1px;
}
.sb-btn + .page-jump {
    margin-top: 3px;
}

/* slide */
.stage {
    flex: 1;
    padding: 17px 0 0 154px;
    min-width: 0;
}
.slide {
    width: 1301px;
    height: 731px;
    display: flex;
    flex-direction: column;
    border: 1px dotted #adaeaa;
    background: #fefefc;
}
.slide-body {
    flex: 1;
    position: relative;
}
.slide-title {
    height: 149px;
    margin: 0;
    padding: 74px 0 0 133px;
    display: flex;
    align-items: flex-start;
    font-weight: 400;
    font-size: 57px;
    line-height: 66px;
    white-space: nowrap;
}
.title-badge {
    width: 52px;
    height: 52px;
}
.slide-title > span {
    margin: -5px 0 0 26px;
}
.title-latin {
    font-family: "Liberation Sans", sans-serif;
    letter-spacing: 3px;
}
.placeholder {
    position: relative;
    width: 1067px;
    height: 477px;
    margin-left: 162px;
    border: 1px dashed #adaeaa;
}
.rotate-stalk {
    position: absolute;
    left: 532px;
    top: -27px;
    width: 1px;
    height: 27px;
    background: #adaeaa;
}
.rotate {
    position: absolute;
    left: 517px;
    top: -58px;
    width: 32px;
    height: 32px;
}
.handle {
    position: absolute;
    width: 14px;
    height: 14px;
    border: 3px solid #adaeaa;
    border-radius: 50%;
    background: #fefefc;
    margin: -7px 0 0 -7px;
}
.h-tl { left: 0; top: 0; }
.h-tm { left: 50%; top: 0; }
.h-tr { left: 100%; top: 0; }
.h-ml { left: 0; top: 50%; }
.h-mr { left: 100%; top: 50%; }
.h-bl { left: 0; top: 100%; }
.h-bm { left: 50%; top: 100%; }
.h-br { left: 100%; top: 100%; }
.points {
    list-style: none;
    margin: 0;
    padding: 9px 0 0 11px;
    font-size: 25.300px;
    white-space: nowrap;
}
.points li {
    height: 45.500px;
    line-height: 45.500px;
    display: flex;
}
.num {
    width: 50px;
    flex: none;
}
.squiggle {
    text-decoration: underline wavy #8f8f8a 1px;
    text-underline-offset: 3px;
}
.hl {
    padding: 3px 0;
    color: inherit;
    background: linear-gradient(#adaeaa, #adaeaa) no-repeat top / 100% 34px;
}
.redactions {
    margin-top: -3px;
}
.rd-row {
    height: 39px;
    background: #adaeaa;
    margin-left: 77px;
    padding-top: 5px;
}
.rd-row i {
    display: block;
    height: 28px;
    background: #6f5f3a;
}
.rd-1 { margin-left: 102px; width: 92px; height: 40px; padding-top: 6px; }
.rd-1 i { margin-left: -25px; width: 111px; }
.rd-2 { width: 143px; }
.rd-2 i { width: 137px; }
.rd-3 { width: 397px; }
.rd-3 i { width: 392px; }
.rd-4 { width: 183px; }
.rd-4 i { width: 178px; }
.rd-5 { width: 551px; }
.rd-5 i { width: 545px; }
.rd-6 { width: 399px; height: 34px; }
.rd-6 i { width: 393px; }
.mouse {
    position: absolute;
    left: 1247px;
    top: 576px;
    width: 13px;
    height: 20px;
}
.slide-foot {
    height: 67px;
    flex: none;
    position: relative;
    background: #e4e3dd;
    display: flex;
    align-items: center;
    justify-content: space-between;
    padding: 0 28px 0 27px;
}
.foot-stripe {
    position: absolute;
    left: 1000px;
    top: 0;
    width: 32px;
    height: 100%;
    background: #fefefc;
    clip-path: polygon(62% 0, 100% 0, 38% 100%, 0 100%);
}
.copyright {
    font-size: 20.700px;
}
.foot-brand {
    display: flex;
    align-items: center;
    gap: 15px;
}
.lab-logo {
    width: 60px;
    height: 60px;
    border: 2px solid #6f5f3a;
    border-radius: 50%;
    display: flex;
    align-items: center;
    justify-content: center;
    font-family: "Liberation Serif", serif;
    font-weight: 700;
    font-size: 27px;
    letter-spacing: -1px;
    white-space: nowrap;
}
.lab-name {
    font-family: "Liberation Serif", "Noto Sans CJK SC", serif;
    font-weight: 700;
    font-size: 19px;
}

/* status bar */
.statusbar {
    height: 30px;
    flex: none;
    display: flex;
    align-items: center;
    background: #f5f5f1;
    border-top: 2px solid #bebdb6;
    border-bottom: 2px solid #6f5f3a;
    padding-left: 3px;
    font-size: 15.500px;
}
.status-count { width: 210px; white-space: nowrap; color: #7d6f4f; font-size: 16.300px; }
.status-spell { width: 18px; height: 18px; }
.status-notes {
    margin-left: 1031px;
    width: 70px;
    display: flex;
    align-items: center;
    gap: 2px;
}
.status-notes svg, .status-display svg {
    width: 18px;
    height: 18px;
}
.status-display {
    width: 122px;
    display: flex;
    align-items: center;
    gap: 3px;
}
.view {
    width: 50px;
    height: 26px;
    display: flex;
    align-items: center;
    justify-content: center;
}
.view svg {
    width: 18px;
    height: 19px;
}
.view-on {
    background: #adaeaa;
}
.zoom-slider {
    margin-left: 7px;
    width: 158px;
    display: flex;
    align-items: center;
    gap: 3px;
}
.zoom-sign {
    font-size: 18px;
    line-height: 18px;
}
.zoom-track {
    position: relative;
    flex: 1;
    height: 1px;
    background: #adaeaa;
    margin: 0 4px;
}
.zoom-track i {
    position: absolute;
    left: 63px;
    top: -7px;
    width: 5px;
    height: 14px;
    background: #6f5f3a;
}
.zoom-pct {
    margin-left: 17px;
    width: 54px;
    font-size: 15.500px;
    color: #7d6f4f;
}
.fit {
    width: 20px;
    height: 20px;
}

/* overlays */
.watermark {
    position: absolute;
    left: 1535px;
    top: 46px;
    font-size: 34px;
    line-height: 44px;
    font-weight: 700;
    color: #fdfdfb;
    white-space: nowrap;
    text-shadow: 0 0 2px #bcbcb6;
}
.recorder {
    position: absolute;
    left: 1726px;
    top: 77px;
    width: 172px;
    height: 43px;
    border-radius: 22px;
    background: #6f5f3a;
    display: flex;
    align-items: center;
    color: #fff;
    padding-left: 8px;
}
.recorder::before {
    content: "";
    position: absolute;
    left: 0;
    top: -13px;
    width: 76px;
    height: 76px;
    border-radius: 50%;
    background: #6f5f3a;
}
.rec-time {
    position: relative;
    width: 77px;
    font-size: 14.500px;
}
.rec-pause {
    position: relative;
    width: 30px;
    display: flex;
    gap: 5px;
}
.rec-pause i {
    width: 5px;
    height: 18px;
    background: #fff;
}
.rec-stop {
    width: 14px;
    height: 16px;
    background: #fff;
    position: relative;
}
.rec-pen {
    width: 15px;
    height: 15px;
    margin-left: 15px;
}
.bili {
    position: absolute;
    left: 1748px;
    top: 32px;
    width: 140px;
    height: 58px;
    opacity: 0.88;
}
.float-menu {
    position: absolute;
    left: -6px;
    top: 917px;
    width: 38px;
    height: 38px;
    border-radius: 50%;
    background: #adaeaa;
    display: flex;
    flex-direction: column;
    justify-content: center;
    gap: 5px;
    padding-left: 12px;
}
.float-menu i {
    width: 15px;
    height: 2px;
    background: #fbfbf8;
}
```
